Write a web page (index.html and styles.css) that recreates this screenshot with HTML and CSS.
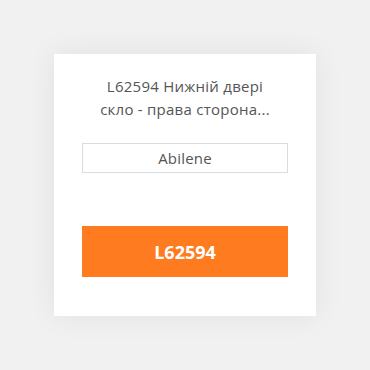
FILE: index.html
```html
<!DOCTYPE html>
<html>
<head>
<meta charset="utf-8">
<link rel="stylesheet" href="styles.css">
</head>
<body>
<div class="card">
  <div class="title">L62594 Нижній двері скло - права сторона...</div>
  <div class="field">Abilene</div>
  <div class="btn">L62594</div>
</div>
</body>
</html>
```
FILE: styles.css
```css
html, body {
  margin: 0;
  padding: 0;
  background: #f1f1f1;
}
body {
  width: 370px;
  height: 370px;
  display: flex;
  align-items: center;
  justify-content: center;
  font-family: "Open Sans", "DejaVu Sans", sans-serif;
}
.card {
  box-sizing: border-box;
  width: 262px;
  height: 262px;
  background: #fff;
  box-shadow: 0 0 28px rgba(0,0,0,0.07);
  padding: 21px 28px 0;
  display: flex;
  flex-direction: column;
}
.title {
  text-align: center;
  font-size: 15px;
  line-height: 23px;
  letter-spacing: 0.25px;
  color: #555;
  padding: 0 16px;
}
.field {
  margin-top: 22px;
  height: 30px;
  box-sizing: border-box;
  border: 1px solid #dcdcdc;
  display: flex;
  align-items: center;
  justify-content: center;
  font-size: 15px;
  letter-spacing: 0.2px;
  color: #555;
}
.btn {
  margin-top: 53px;
  height: 51px;
  background: #ff7b20;
  color: #fff;
  font-weight: 700;
  font-size: 18px;
  display: flex;
  align-items: center;
  justify-content: center;
}
```
